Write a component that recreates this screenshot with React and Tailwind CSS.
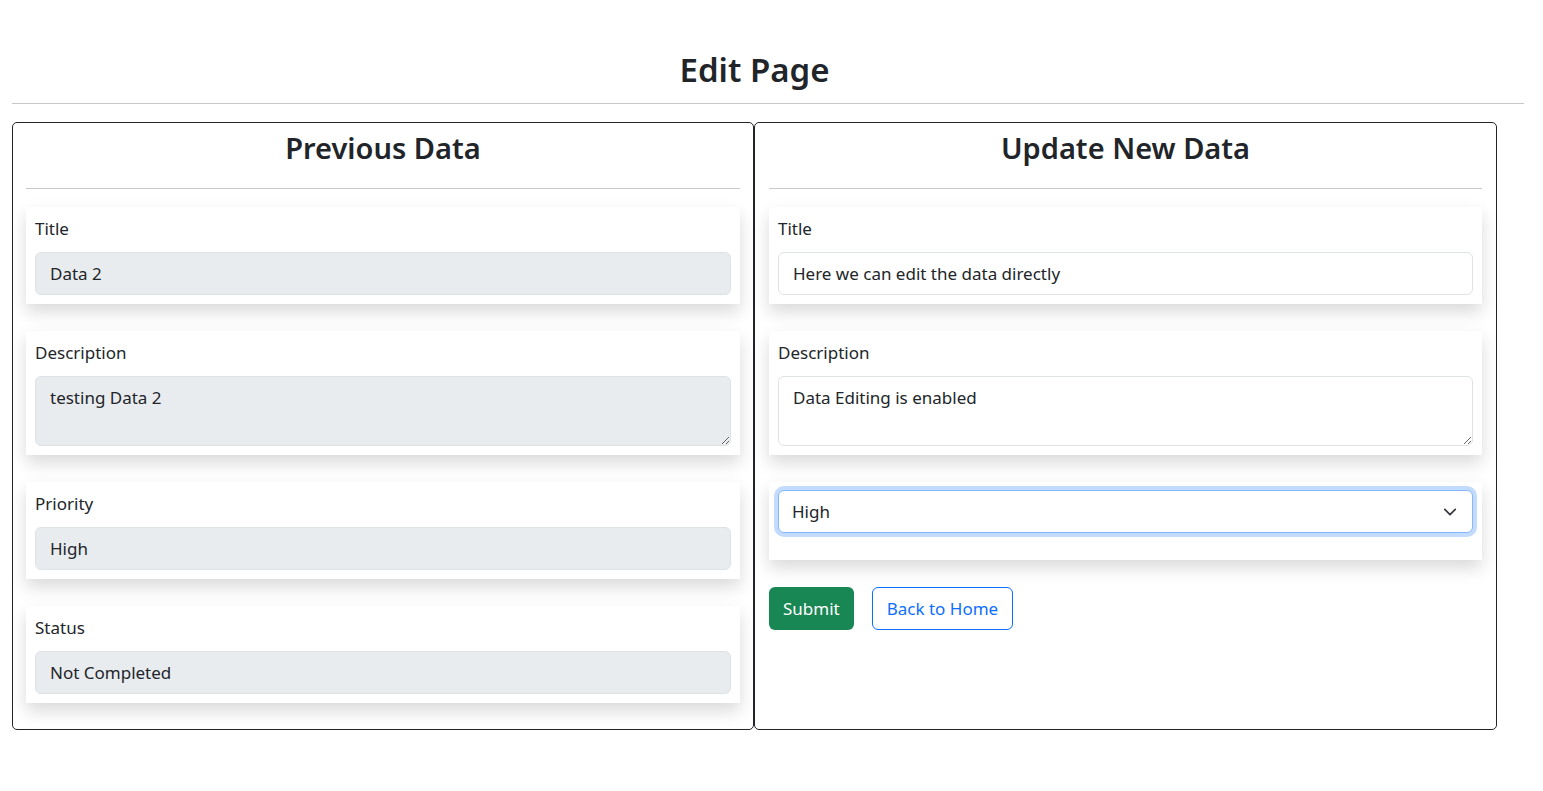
import React from 'react';

const font = { fontFamily: '"Noto Sans", "Open Sans", sans-serif' };

const Field = ({ label, value, area, disabled }) => (
    <div className="bg-white px-[9px] pt-[10px] pb-[9px] shadow-[0_8px_16px_rgba(0,0,0,0.15)]">
        <label className="block text-[17px] leading-[24px] text-[#212529] mb-[11px]">{label}</label>
        {area ? (
            <textarea
                readOnly
                defaultValue={value}
                className={`block w-full h-[70px] rounded-[6px] border border-[#dee2e6] px-[14px] py-[9px] text-[17px] leading-[24px] text-[#212529] outline-none resize-y ${disabled ? 'bg-[#e9ecef]' : 'bg-white'}`}
            />
        ) : (
            <input
                readOnly
                defaultValue={value}
                className={`block w-full h-[43px] rounded-[6px] border border-[#dee2e6] px-[14px] text-[17px] text-[#212529] outline-none ${disabled ? 'bg-[#e9ecef]' : 'bg-white'}`}
            />
        )}
    </div>
);

const App = () => {
    return (
        <div className="bg-white min-h-screen px-[12px]" style={font}>
            <h1 className="w-[1485px] pt-[51px] text-center text-[33px] leading-[38px] font-semibold text-[#212529]">Edit Page</h1>
            <hr className="mt-[14px] border-t border-[#c8c8c8] w-[1512px]" />

            <div className="flex mt-[18px]">
                {/* Previous Data */}
                <div className="w-[742px] h-[608px] border border-[#212529] rounded-[5px] px-[13px] pt-[6px]">
                    <h2 className="text-center text-[29px] leading-[38px] font-semibold text-[#212529]">Previous Data</h2>
                    <hr className="mt-[21px] border-t border-[#c8c8c8]" />
                    <div className="mt-[18px] flex flex-col gap-[27px]">
                        <Field label="Title" value="Data 2" disabled />
                        <Field label="Description" value="testing Data 2" area disabled />
                        <Field label="Priority" value="High" disabled />
                        <Field label="Status" value="Not Completed" disabled />
                    </div>
                </div>

                {/* Update New Data */}
                <div className="w-[743px] h-[608px] border border-[#212529] rounded-[5px] pl-[14px] pr-[14px] pt-[6px]">
                    <h2 className="text-center text-[29px] leading-[38px] font-semibold text-[#212529]">Update New Data</h2>
                    <hr className="mt-[21px] border-t border-[#c8c8c8]" />
                    <div className="mt-[18px] flex flex-col gap-[27px]">
                        <Field label="Title" value="Here we can edit the data directly" />
                        <Field label="Description" value="Data Editing is enabled" area />
                    </div>
                    <div className="mt-[27px] bg-white px-[9px] pt-[8px] pb-[27px] shadow-[0_8px_16px_rgba(0,0,0,0.15)]">
                        <div className="relative">
                            <select
                                defaultValue="High"
                                className="block w-full h-[43px] appearance-none rounded-[6px] border border-[#86b7fe] bg-white px-[13px] text-[17px] text-[#212529] outline-none shadow-[0_0_0_4px_rgba(13,110,253,0.25)]"
                                style={font}
                            >
                                <option>High</option>
                                <option>Medium</option>
                                <option>Low</option>
                            </select>
                            <svg className="absolute right-[16px] top-[15px] pointer-events-none" width="14" height="14" viewBox="0 0 16 16" fill="none">
                                <path d="M2 5l6 6 6-6" stroke="#343a40" strokeWidth="2" strokeLinecap="round" strokeLinejoin="round" />
                            </svg>
                        </div>
                    </div>
                    <div className="mt-[27px] flex gap-[18px]">
                        <button className="h-[43px] px-[14px] rounded-[6px] bg-[#198754] text-white text-[17px]">Submit</button>
                        <button className="h-[43px] px-[14px] rounded-[6px] border border-[#0d6efd] text-[#0d6efd] text-[17px]">Back to Home</button>
                    </div>
                </div>
            </div>
        </div>
    );
};

export default App;
